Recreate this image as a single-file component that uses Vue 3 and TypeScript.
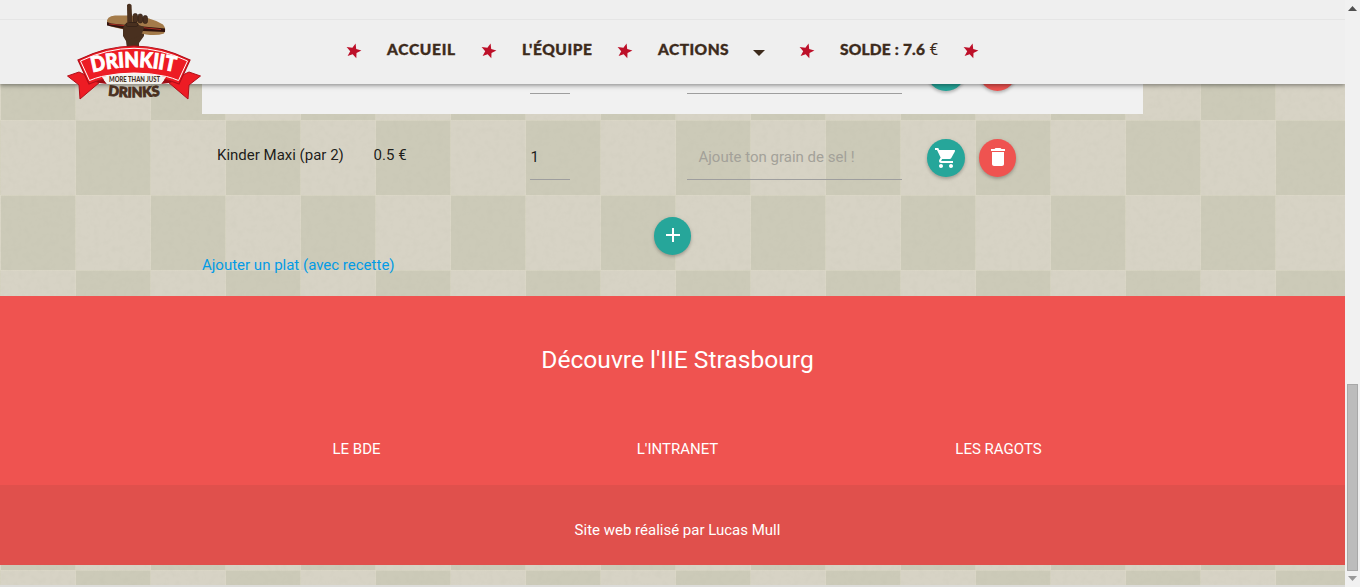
<script setup lang="ts">
import { ref } from 'vue'

interface NavItem {
  label: string
  key: string
  suffix?: string
  dropdown?: boolean
}

const navItems: NavItem[] = [
  { label: 'Accueil', key: 'home' },
  { label: "L'équipe", key: 'team' },
  { label: 'Actions', key: 'actions', dropdown: true },
  { label: 'Solde : 7.6', key: 'balance', suffix: '€' },
]

const links: string[] = ['Le BDE', "L'intranet", 'Les ragots']
const quantity = ref<string>('1')
const note = ref<string>('')

const starPoints = '9.6,0.5 10.2,5.9 15.4,7.6 10.5,9.9 10.3,15.2 6.7,11.3 1.6,12.9 4.2,8.2 0.6,4 6.4,4.8'
</script>

<template>
  <div class="window">
    <div class="page">
      <svg class="grain" width="1345" height="503" aria-hidden="true">
        <filter id="paper" x="0" y="0" width="100%" height="100%">
          <feTurbulence type="fractalNoise" baseFrequency="0.16" numOctaves="3" seed="4" />
          <feColorMatrix values="0 0 0 0 .45  0 0 0 0 .45  0 0 0 0 .36  .2 0 0 0 -.085" />
        </filter>
        <rect width="1345" height="503" filter="url(#paper)" />
      </svg>

      <header class="header">
        <div class="strip"></div>
        <nav class="nav">
          <template v-for="item in navItems" :key="item.key">
            <svg class="star" width="16" height="16" viewBox="0 0 16 16"><polygon :points="starPoints" /></svg>
            <a class="nav-link" :class="item.key">
              <span class="nav-label">{{ item.label }}</span>
              <svg v-if="item.dropdown" class="caret" width="12" height="6" viewBox="0 0 12 6"><path d="M0 0h12L6 6z" /></svg>
              <span v-if="item.suffix" class="euro">{{ item.suffix }}</span>
            </a>
          </template>
          <svg class="star" width="16" height="16" viewBox="0 0 16 16"><polygon :points="starPoints" /></svg>
        </nav>
        <svg class="logo" width="136" height="104" viewBox="66 0 136 104">
          <defs>
            <path id="brandArc" d="M92.500 72.500Q134 61.500 177 72.500" />
            <path id="drinksArc" d="M108 95.500Q134 99 161 95.500" />
          </defs>
          <path d="M127 49l-1-8-3-5V24h21v12l-5 7v6z" fill="#49301f" />
          <path d="M107 23q-1-7 8-7.500l15 0q20 1 33 9 4 5 1 9-7 2.500-18 1l-31-7q-7-1-8-4.500z" fill="#a47b4a" />
          <path d="M107 22q4 2 9 2l49 4.500v3.500l-34-1.500-24-5z" fill="#30140f" />
          <path d="M109 24l52 5.500" stroke="#a62b20" stroke-width="1" />
          <path d="M123 30q0-7 7-8 7-1 9 3l5 2q-1 7-5 9l-12 5q-4-4-4-11z" fill="#49301f" />
          <path d="M127 5q2-2.500 4.500 0l.8 17h-5z" fill="#49301f" />
          <g fill="#49301f" stroke="#2b1c14" stroke-width=".6">
            <rect x="133" y="13.500" width="4.500" height="9" rx="2" />
            <rect x="138" y="14" width="4.500" height="9" rx="2" />
            <rect x="143" y="15.500" width="4.500" height="8" rx="2" />
            <rect x="126" y="22.500" width="12" height="4" rx="2" />
          </g>
          <path d="M67.500 76l11.500-4 21 10-20 17-1-14zM200.500 76l-11.500-4-21 10 20 17 1-14z" fill="#ed1c24" stroke="#b10f19" />
          <path d="M89 80q7-2 14-1l4 5q-10-1-18-4zM179 80q-7-2-14-1l-4 5q10-1 18-4z" fill="#9d0d15" />
          <path d="M78 60q56-28 112 0l-11 24q-45-18-90 0z" fill="#ed1c24" stroke="#b10f19" stroke-width="1.200" />
          <path d="M102 77q32-8 64 0l-5 7h-54z" fill="#f4f2ee" />
          <path d="M80.500 61q53.500-25.500 107 0l-9 19.500q-6-2.500-12-4q-32-7-65 0-6 1.500-12 4z" fill="none" stroke="#fff" stroke-width="1" />
          <text class="logo-brand"><textPath href="#brandArc" textLength="83" lengthAdjust="spacingAndGlyphs">DRINKIIT</textPath></text>
          <text class="logo-small" x="109" y="82" textLength="51" lengthAdjust="spacingAndGlyphs">MORE THAN JUST</text>
          <text class="logo-drinks"><textPath href="#drinksArc" textLength="52" lengthAdjust="spacingAndGlyphs">DRINKS</textPath></text>
        </svg>
      </header>

      <main class="content">
        <div v-for="row in 2" :key="row" class="row" :class="{ shaded: row === 1 }">
          <div class="cell name"><span v-if="row === 2">Kinder Maxi (par 2)</span></div>
          <div class="cell price"><span v-if="row === 2">0.5 €</span></div>
          <div class="cell"><input v-if="row === 2" v-model="quantity" class="field qty" /><i v-else class="field qty"></i></div>
          <div class="cell">
            <input v-if="row === 2" v-model="note" class="field note" placeholder="Ajoute ton grain de sel !" />
            <i v-else class="field note"></i>
          </div>
          <div class="buttons">
            <button class="round teal">
              <svg class="cart" width="24" height="24" viewBox="0 0 24 24"><path d="M7 18c-1.100 0-1.990.9-1.990 2S5.900 22 7 22s2-.9 2-2-.9-2-2-2zM1 2v2h2l3.600 7.590-1.350 2.450c-.16.28-.25.61-.25.96 0 1.100.9 2 2 2h12v-2H7.420c-.14 0-.25-.11-.25-.25l.03-.12.9-1.630h7.450c.75 0 1.410-.41 1.750-1.030l3.580-6.490A1 1 0 0 0 20 4H5.210l-.94-2H1zm16 16c-1.100 0-1.990.9-1.990 2s.89 2 1.990 2 2-.9 2-2-.9-2-2-2z" /></svg>
            </button>
            <button class="round red">
              <svg class="glyph" width="24" height="24" viewBox="0 0 24 24"><path d="M6 19c0 1.100.9 2 2 2h8c1.100 0 2-.9 2-2V7H6v12zM19 4h-3.500l-1-1h-5l-1 1H5v2h14V4z" /></svg>
            </button>
          </div>
        </div>
        <div class="add">
          <button class="round teal">
            <svg class="glyph" width="24" height="24" viewBox="0 0 24 24"><path d="M19 13h-6v6h-2v-6H5v-2h6V5h2v6h6z" /></svg>
          </button>
        </div>
        <a class="recipe">Ajouter un plat (avec recette)</a>
      </main>

      <footer class="footer">
        <div class="discover">
          <h5>Découvre l'IIE Strasbourg</h5>
          <div class="links"><a v-for="link in links" :key="link">{{ link }}</a></div>
        </div>
        <div class="credit">Site web réalisé par Lucas Mull</div>
      </footer>
    </div>

    <div class="scrollbar">
      <svg width="9" height="5" viewBox="0 0 9 5"><path d="M0 5l4.500-5L9 5z" fill="#505050" /></svg>
      <div class="track"><div class="thumb"></div></div>
      <svg width="9" height="5" viewBox="0 0 9 5"><path d="M0 0l4.500 5L9 0z" fill="#999" /></svg>
    </div>
  </div>
</template>

<style>
body { margin: 0; overflow: hidden; }
</style>

<style scoped>
* { box-sizing: border-box; }
.window { display: flex; width: 1360px; height: 587px; overflow: hidden; font: 15px/22px Roboto, sans-serif; color: rgba(0, 0, 0, .87); }
.page {
  position: relative; width: 1345px; height: 587px; overflow: hidden;
  border-bottom: 2px solid #dcdcda;
  background:
    linear-gradient(rgba(222, 218, 200, .5) 1px, transparent 1px) 0 120px / 75px 75px,
    linear-gradient(90deg, rgba(222, 218, 200, .5) 1px, transparent 1px) 0 0 / 75px 75px,
    conic-gradient(#cccab8 25%, #d7d3c5 0 50%, #cccab8 0 75%, #d7d3c5 0) 1px 120px / 150px 150px;
}
.grain { position: absolute; top: 84px; left: 0; }
.header { position: relative; z-index: 2; height: 84px; background: #efefef; box-shadow: 0 2px 5px rgba(0, 0, 0, .26), 0 1px 3px rgba(0, 0, 0, .18); }
.strip { height: 20px; border-bottom: 1px solid #e5e5e5; }
.nav { display: flex; align-items: center; height: 64px; padding-left: 346px; }
.star { flex: none; margin-top: -2px; fill: #bd1029; }
.nav-link { display: flex; align-items: center; flex: none; height: 60px; padding-left: 25px; color: #3d2b1c; }
.nav-label { flex: none; font: 900 15.500px/20px Lato, sans-serif; -webkit-text-stroke: .35px #3d2b1c; text-transform: uppercase; white-space: nowrap; margin-top: -6px; }
.home { width: 119px; letter-spacing: .7px; }
.team { width: 120px; letter-spacing: .55px; }
.actions { width: 166px; letter-spacing: .45px; }
.balance { width: 148px; letter-spacing: .2px; }
.caret { margin: 1px 0 0 24px; fill: #3d2b1c; }
.euro { margin: -4px 0 0 4px; font: 16px/20px Roboto, sans-serif; }
.logo { position: absolute; left: 66px; top: 0; }
.logo-brand { font: 900 21px Lato, sans-serif; fill: #fff; stroke: #fff; stroke-width: .9px; }
.logo-small { font: 900 6.500px Lato, sans-serif; fill: #49301f; }
.logo-drinks { font: 900 14px Lato, sans-serif; fill: #49301f; stroke: #49301f; stroke-width: .9px; }
.content { position: relative; display: flow-root; width: 941px; height: 212px; margin: 0 auto; }
.row { display: grid; grid-template-columns: 156.600px 156.400px 157px 240.300px 1fr; height: 86px; padding-left: 15px; }
.row.shaded { margin-top: -56px; background: #f1f1f1; }
.name, .price { padding-top: 30px; white-space: nowrap; }
.field { display: block; height: 46px; margin-top: 20px; padding: 1px 0 0; border: 0; border-bottom: 1px solid #9e9e9e; border-radius: 0; outline: 0; background: transparent; color: rgba(0, 0, 0, .87); font: 15px Roboto, sans-serif; }
.qty { width: 40px; padding-left: .5px; }
.note { width: 215px; padding-left: 11.500px; }
.field::placeholder { color: #a3a199; opacity: 1; }
.buttons { display: flex; gap: 14px; padding-top: 25px; }
.round { display: flex; align-items: center; justify-content: center; flex: none; width: 37.500px; height: 38px; padding: 0; border: 0; border-radius: 50%; box-shadow: 0 2px 3px rgba(0, 0, 0, .18), 0 1px 5px rgba(0, 0, 0, .1); }
.round svg { fill: #fff; }
.cart { margin-top: -1px; }
.glyph { margin-top: -2px; }
.round.teal { background: #26a69a; }
.round.red { background: #ef5350; }
.add { display: flex; justify-content: center; padding-top: 17px; }
.recipe { display: block; margin-top: -1px; color: #039be5; }
.footer { position: relative; color: #fff; text-align: center; }
.discover { height: 189px; padding: 49px 0 0 10px; background: #ef5350; }
h5 { margin: 0; font-size: 24.600px; line-height: 30px; font-weight: 400; }
.links { display: grid; grid-template-columns: repeat(3, 321px); justify-content: center; margin-top: 63px; text-transform: uppercase; }
.credit { height: 80px; padding: 34px 0 0 10px; background: #e0504c; }
.scrollbar { display: flex; flex-direction: column; align-items: center; width: 15px; padding: 6px 0; background: #f1f1f1; }
.track { flex: 1; width: 11px; padding-top: 373px; }
.thumb { height: 187px; background: #bcbcbc; border: 1px solid #a8a8a8; }
</style>
